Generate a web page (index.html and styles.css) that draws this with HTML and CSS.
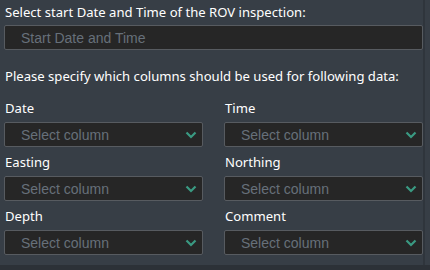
FILE: index.html
```html
<!DOCTYPE html>
<html>
<head>
<meta charset="utf-8">
<link rel="stylesheet" href="styles.css">
</head>
<body>
<div class="page">
  <div class="panel">
    <div class="title">Select start Date and Time of the ROV inspection:</div>
    <div class="input"><span class="ph">Start Date and Time</span></div>
    <div class="title second">Please specify which columns should be used for following data:</div>
    <div class="grid">
      <div class="field">
        <div class="label">Date</div>
        <div class="select"><span class="ph">Select column</span><svg class="chev" width="12" height="8" viewBox="0 0 12 8"><path d="M1.5 1.5 L6 6 L10.5 1.5" fill="none" stroke="#3a9a82" stroke-width="2.2"/></svg></div>
      </div>
      <div class="field">
        <div class="label">Time</div>
        <div class="select"><span class="ph">Select column</span><svg class="chev" width="12" height="8" viewBox="0 0 12 8"><path d="M1.5 1.5 L6 6 L10.5 1.5" fill="none" stroke="#3a9a82" stroke-width="2.2"/></svg></div>
      </div>
      <div class="field">
        <div class="label">Easting</div>
        <div class="select"><span class="ph">Select column</span><svg class="chev" width="12" height="8" viewBox="0 0 12 8"><path d="M1.5 1.5 L6 6 L10.5 1.5" fill="none" stroke="#3a9a82" stroke-width="2.2"/></svg></div>
      </div>
      <div class="field">
        <div class="label">Northing</div>
        <div class="select"><span class="ph">Select column</span><svg class="chev" width="12" height="8" viewBox="0 0 12 8"><path d="M1.5 1.5 L6 6 L10.5 1.5" fill="none" stroke="#3a9a82" stroke-width="2.2"/></svg></div>
      </div>
      <div class="field">
        <div class="label">Depth</div>
        <div class="select"><span class="ph">Select column</span><svg class="chev" width="12" height="8" viewBox="0 0 12 8"><path d="M1.5 1.5 L6 6 L10.5 1.5" fill="none" stroke="#3a9a82" stroke-width="2.2"/></svg></div>
      </div>
      <div class="field">
        <div class="label">Comment</div>
        <div class="select"><span class="ph">Select column</span><svg class="chev" width="12" height="8" viewBox="0 0 12 8"><path d="M1.5 1.5 L6 6 L10.5 1.5" fill="none" stroke="#3a9a82" stroke-width="2.2"/></svg></div>
      </div>
    </div>
  </div>
  <div class="footer"></div>
</div>
</body>
</html>
```
FILE: styles.css
```css
html, body {
  margin: 0;
  padding: 0;
  background: #373e46;
}
.page {
  width: 430px;
  height: 270px;
  display: flex;
  flex-direction: column;
  overflow: hidden;
}
.panel {
  width: 425px;
  height: 265px;
  box-sizing: border-box;
  padding: 2px 2px 0 4px;
  border-right: 2px solid #2f353c;
  font-family: "Noto Sans", "Open Sans", sans-serif;
  font-size: 13.1px;
  color: #ffffff;
}
.title {
  height: 20px;
  line-height: 20px;
  padding-left: 1px;
  white-space: nowrap;
}
.title.second {
  margin-top: 16px;
}
.input, .select {
  box-sizing: border-box;
  height: 25px;
  background: #262626;
  border: 1px solid #575b60;
  border-radius: 2px;
  display: flex;
  align-items: center;
  padding-left: 16px;
  font-family: "Liberation Sans", Arial, sans-serif;
  font-size: 14px;
}
.input {
  margin-top: 3px;
  width: 419px;
}
.ph {
  color: #67707a;
  flex: 1;
}
.grid {
  margin-top: 12px;
  width: 419px;
  display: grid;
  grid-template-columns: 199px 199px;
  column-gap: 21px;
  row-gap: 5px;
}
.label {
  height: 20px;
  line-height: 20px;
  margin-bottom: 4px;
  padding-left: 1px;
}
.chev {
  margin-right: 5px;
}
.footer {
  height: 5px;
  background: #2c3137;
}
```
